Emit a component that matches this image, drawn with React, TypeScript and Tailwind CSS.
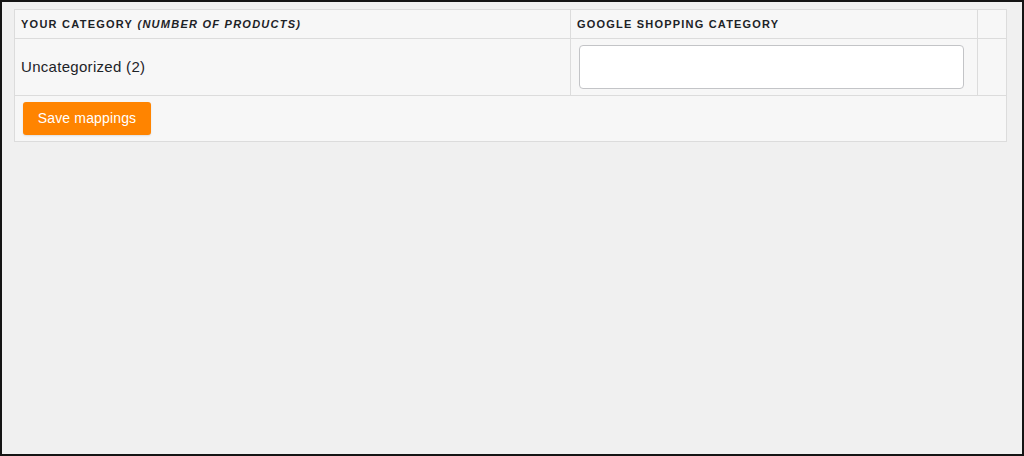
import React from "react";

function App() {
  return (
    <div className="w-[1024px] h-[456px] border-2 border-[#141414] bg-[#f0f0f0] pt-[7px] pl-[12px] font-['Liberation_Sans',Arial,sans-serif]">
      <div className="w-[993px] border border-[#dcdcdc] bg-[#f7f7f7]">
        {/* header */}
        <div className="flex h-[29px] border-b border-[#dcdcdc]">
          <div className="w-[556px] border-r border-[#dcdcdc] pl-[6px] flex items-center text-[11px] font-bold tracking-[1.25px] text-[#1d2327] uppercase">
            Your category&nbsp;<span className="italic">(number of products)</span>
          </div>
          <div className="w-[407px] border-r border-[#dcdcdc] pl-[6px] flex items-center text-[11px] font-bold tracking-[1.2px] text-[#1d2327] uppercase">
            Google Shopping category
          </div>
          <div className="flex-1" />
        </div>
        {/* row */}
        <div className="flex h-[57px] border-b border-[#dcdcdc]">
          <div className="w-[556px] border-r border-[#dcdcdc] pl-[6px] flex items-center text-[15px] tracking-[0.3px] text-[#1d2327]">
            Uncategorized (2)
          </div>
          <div className="w-[407px] border-r border-[#dcdcdc] pl-[8px] pt-[6px]">
            <input
              type="text"
              className="w-[385px] h-[44px] bg-white border border-[#c3c4c7] rounded-[4px] outline-none"
            />
          </div>
          <div className="flex-1" />
        </div>
        {/* footer */}
        <div className="h-[45px] pl-[8px] pt-[6px]">
          <button className="w-[128px] h-[33px] bg-[#ff8400] rounded-[3px] text-white text-[14px] tracking-[0.15px] shadow-[0_1px_2px_rgba(0,0,0,0.1)]">
            Save mappings
          </button>
        </div>
      </div>
    </div>
  );
}

export default App;
